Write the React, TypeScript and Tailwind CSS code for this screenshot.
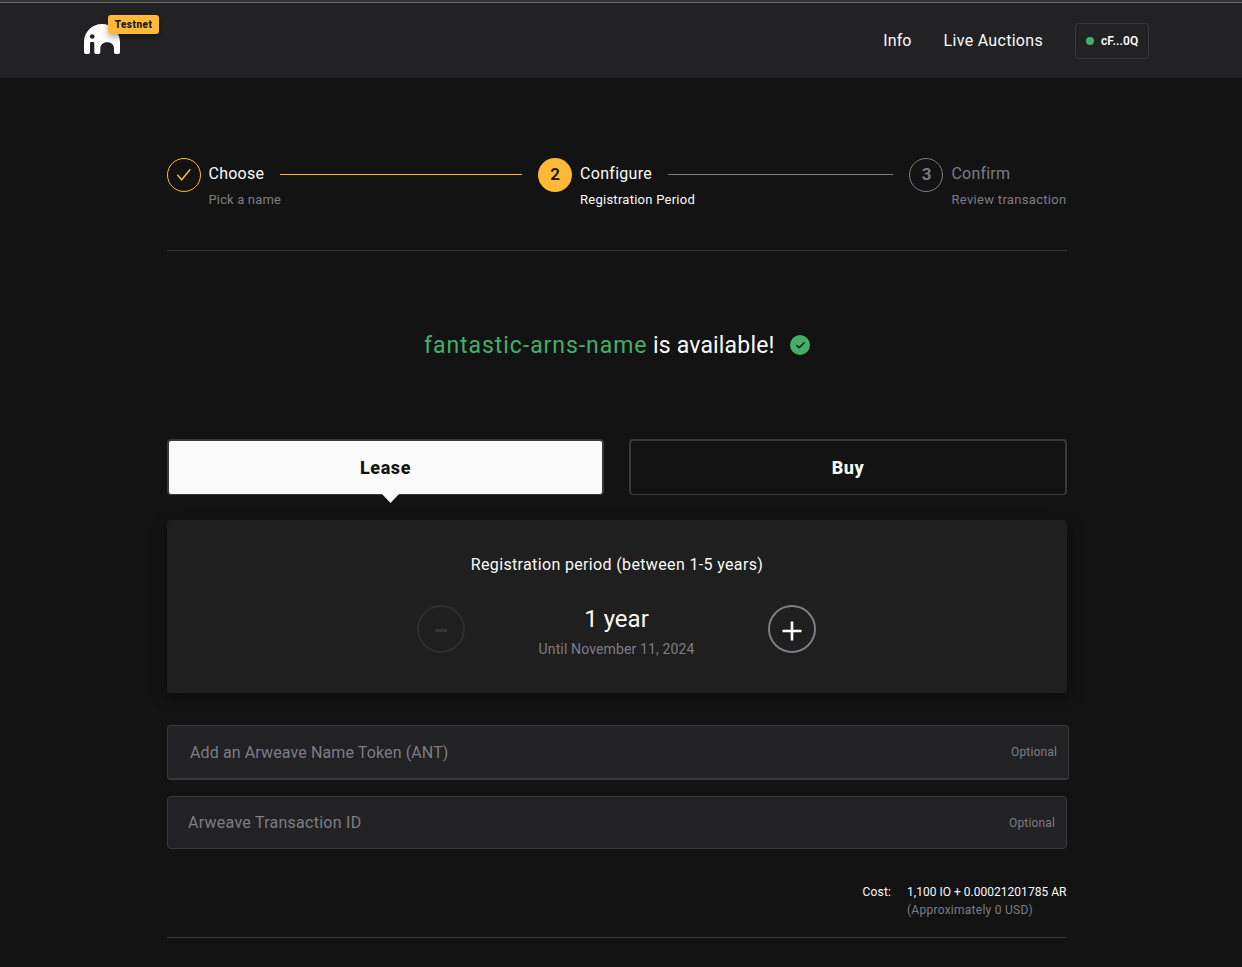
import { Check } from "lucide-react";

function Logo() {
  return (
    <svg width="36" height="31" viewBox="0 0 36 31" className="block">
      <path
        fill="#fff"
        fillRule="evenodd"
        d="M0 28.200V18C0 8 8 0 18 0S36 8 36 18V28.200Q36 30 34.300 30H31.700Q30 30 30 28.200V24.500C30 20.500 27.200 18.200 23.200 18.200S16.300 20.500 16.300 24.500V28.200Q16.300 30 14.600 30H12Q10.300 30 10.300 28.200V19Q10.300 18 9.300 18H7Q6 18 6 19V28.200Q6 30 4.300 30H1.700Q0 30 0 28.200ZM8.200 10.200a2.300 2.300 0 1 0 .01 0Z"
      />
    </svg>
  );
}

function Header() {
  return (
    <header className="flex h-[78px] justify-between border-t-2 border-[#363636] bg-[#222224]">
      <div className="flex w-full justify-between border-t border-[#666] pl-[84px] pr-[93px]">
        <div className="relative pt-[21px]">
          <Logo />
          <span className="absolute left-6 top-3 flex h-[19px] w-[51px] items-center justify-center rounded-[3px] bg-[#ffb938] pb-px text-[10px] font-extrabold tracking-[0.500px] text-[#131313] shadow-[0_3px_6px_rgba(0,0,0,0.35)]">
            Testnet
          </span>
        </div>
        <nav className="flex h-[75px] items-center text-base text-[#fafafa]">
          <a className="mr-8 tracking-[0.100px]">Info</a>
          <a className="mr-8 tracking-[0.300px]">Live Auctions</a>
          <button className="flex h-9 w-[74px] items-center gap-[7px] whitespace-nowrap rounded-[4px] border border-[#38393b] pl-[10px] text-[12px] font-semibold tracking-[0.100px]">
            <span className="size-2 shrink-0 rounded-full bg-[#44af69]" />
            cF...0Q
          </button>
        </nav>
      </div>
    </header>
  );
}

function Steps() {
  return (
    <ol className="flex h-[93px] border-b border-[#38393b]">
      <li className="flex w-[371px]">
        <span className="flex size-[34px] shrink-0 items-center justify-center rounded-full border border-[#ffb938]">
          <svg width="16" height="14" viewBox="0 0 16 14" fill="none" stroke="#ffb938" strokeWidth="1.400">
            <path d="M1.300 6.800 5.700 11.800 14.300 1.200" />
          </svg>
        </span>
        <div className="ml-[7.500px] w-[71.500px] whitespace-nowrap">
          <p className="h-[31px] text-base leading-[31px] tracking-[0.250px] text-[#fafafa]">Choose</p>
          <p className="text-[13px] leading-[21px] tracking-[0.150px] text-[#7d7d85]">Pick a name</p>
        </div>
        <span className="mt-4 h-px w-[242px] bg-[#ffb938]" />
      </li>
      <li className="flex w-[371px]">
        <span className="flex size-[34px] shrink-0 items-center justify-center rounded-full bg-[#ffb938] text-[17px] font-semibold text-[#131313]">
          2
        </span>
        <div className="ml-2 w-[88px] whitespace-nowrap text-[#fafafa]">
          <p className="h-[31px] text-base leading-[31px] tracking-[0.300px]">Configure</p>
          <p className="text-[13px] leading-[21px] tracking-[0.260px]">Registration Period</p>
        </div>
        <span className="mt-4 h-px w-[225px] bg-[#7d7d85]" />
      </li>
      <li className="flex text-[#7d7d85]">
        <span className="flex size-[34px] shrink-0 items-center justify-center rounded-full border border-[#7d7d85] pl-px text-[17px] font-semibold">
          3
        </span>
        <div className="ml-[8.500px] whitespace-nowrap">
          <p className="h-[31px] text-base leading-[31px] tracking-[0.200px]">Confirm</p>
          <p className="text-[13px] leading-[21px] tracking-[0.310px]">Review transaction</p>
        </div>
      </li>
    </ol>
  );
}

function PeriodPanel() {
  return (
    <section className="mt-[25px] h-[173px] rounded-[4px] bg-[#1f1f1f] pt-[33px] shadow-[0_4px_16px_rgba(0,0,0,0.4)]">
      <p className="text-center text-base leading-6 tracking-[0.350px] text-[#fafafa]">
        Registration period (between 1-5 years)
      </p>
      <div className="ml-[250px] mt-7 flex w-[399px] justify-between">
        <button className="flex size-12 items-center justify-center rounded-full border-2 border-[#2f2f30]">
          <span className="mr-px mt-[3px] h-[3px] w-3 bg-[#343436]" />
        </button>
        <div className="w-40 text-center">
          <p className="text-2xl leading-7 text-[#fafafa]">1 year</p>
          <p className="mt-[5px] whitespace-nowrap text-sm leading-[22px] tracking-[0.130px] text-[#7d7d85]">
            Until November 11, 2024
          </p>
        </div>
        <button className="flex size-12 items-center justify-center rounded-full border-2 border-[#7d7d85]">
          <svg width="20" height="20" viewBox="0 0 20 20" className="mt-[3px]">
            <path d="M10 .5v19M.5 10h19" stroke="#fff" strokeWidth="2.600" />
          </svg>
        </button>
      </div>
    </section>
  );
}

export default function App() {
  return (
    <div className="h-[967px] w-full overflow-hidden bg-[#131313] font-['Roboto',sans-serif]">
      <Header />
      <main className="ml-[167px] w-[900px] pt-20">
        <Steps />
        <h1 className="ml-[257px] mt-[78px] flex h-8 items-center whitespace-nowrap text-[23px] text-[#fafafa]">
          <span className="w-[229px] pt-[2px] tracking-[0.950px] text-[#44af69]">fantastic-arns-name</span>
          <span className="w-[137px] pt-[2px] tracking-[0.180px]">is available!</span>
          <span className="flex size-5 items-center justify-center rounded-full bg-[#44af69]">
            <Check size={11} strokeWidth={3.200} color="#131313" />
          </span>
        </h1>
        <div className="mt-[78px] flex justify-between text-lg font-extrabold tracking-[0.600px]">
          <button className="relative h-14 w-[437px] rounded-[4px] border-2 border-b border-[#38393b] bg-[#fafafa] pt-px text-[#131313]">
            Lease
            <svg width="18" height="9" viewBox="0 0 18 9" className="absolute left-[213px] top-[53px]">
              <path d="M0 0h17L8.500 9Z" fill="#fafafa" />
            </svg>
          </button>
          <button className="h-14 w-[438px] rounded-[4px] border-2 border-b border-[#38393b] pt-px text-[#fafafa]">Buy</button>
        </div>
        <PeriodPanel />
        <div className="mt-8 flex h-[55px] w-[902px] items-center justify-between rounded-[4px] border border-b-2 border-[#38393b] bg-[#222224] pl-[22px] pr-[11px] text-[#7d7d85]">
          <span className="pt-px text-base tracking-[0.120px]">Add an Arweave Name Token (ANT)</span>
          <span className="text-xs tracking-[0.150px]">Optional</span>
        </div>
        <div className="mt-4 flex h-[53px] items-center justify-between rounded-[4px] border border-[#38393b] bg-[#222224] pl-5 pr-[11px] text-[#7d7d85]">
          <span className="text-base tracking-[0.260px]">Arweave Transaction ID</span>
          <span className="text-xs tracking-[0.150px]">Optional</span>
        </div>
        <div className="flex h-[89px] justify-end whitespace-nowrap border-b border-[#38393b] pt-[34px] text-xs leading-[18px] text-[#fafafa]">
          <span className="w-[44.500px] tracking-[0.200px]">Cost:</span>
          <div className="w-40">
            <p className="tracking-[0.020px]">1,100 IO + 0.00021201785 AR</p>
            <p className="tracking-[0.260px] text-[#7d7d85]">(Approximately 0 USD)</p>
          </div>
        </div>
      </main>
    </div>
  );
}
